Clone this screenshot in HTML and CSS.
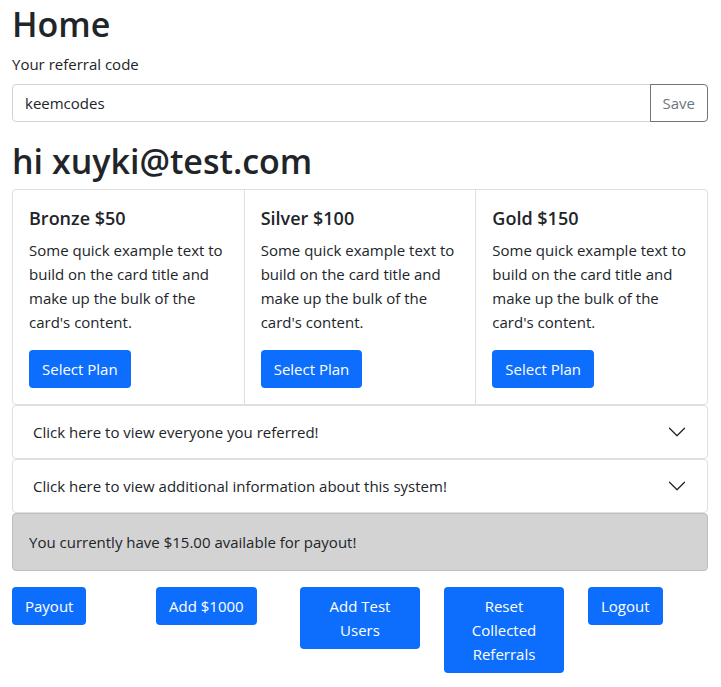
FILE: index.html
```html
<!DOCTYPE html>
<html lang="en">
<head>
<meta charset="utf-8">
<title>Home</title>
<link rel="stylesheet" href="styles.css">
</head>
<body>
<main class="container">
  <h1 class="title">Home</h1>
  <label class="label" for="code">Your referral code</label>
  <div class="input-group">
    <input class="input" id="code" type="text" value="keemcodes">
    <button class="save" type="button">Save</button>
  </div>
  <h1 class="title">hi xuyki@test.com</h1>
  <section class="cards">
    <article class="card">
      <h2 class="card-title">Bronze $50</h2>
      <p class="card-text">Some quick example text to build on the card title and make up the bulk of the card's content.</p>
      <button class="btn" type="button">Select Plan</button>
    </article>
    <article class="card">
      <h2 class="card-title">Silver $100</h2>
      <p class="card-text">Some quick example text to build on the card title and make up the bulk of the card's content.</p>
      <button class="btn" type="button">Select Plan</button>
    </article>
    <article class="card">
      <h2 class="card-title">Gold $150</h2>
      <p class="card-text">Some quick example text to build on the card title and make up the bulk of the card's content.</p>
      <button class="btn" type="button">Select Plan</button>
    </article>
  </section>
  <button class="accordion" type="button" aria-expanded="false">Click here to view everyone you referred!
    <svg class="chevron" viewBox="0 0 16 16" aria-hidden="true"><path d="M2 5l6 6 6-6"/></svg>
  </button>
  <button class="accordion" type="button" aria-expanded="false">Click here to view additional information about this system!
    <svg class="chevron" viewBox="0 0 16 16" aria-hidden="true"><path d="M2 5l6 6 6-6"/></svg>
  </button>
  <p class="balance">You currently have $15.00 available for payout!</p>
  <div class="actions">
    <div class="action"><button class="btn" type="button">Payout</button></div>
    <div class="action"><button class="btn" type="button">Add $1000</button></div>
    <div class="action"><button class="btn" type="button">Add Test Users</button></div>
    <div class="action"><button class="btn" type="button">Reset Collected Referrals</button></div>
    <div class="action"><button class="btn" type="button">Logout</button></div>
  </div>
</main>
</body>
</html>
```
FILE: styles.css
```css
* {
  box-sizing: border-box;
}

body {
  margin: 0;
  background: #fff;
  color: #212529;
  font: 400 15px/24px "Open Sans", "Noto Sans", sans-serif;
}

button,
input {
  font: inherit;
}

.container {
  padding: 1px 13px 0 12px;
}

.title {
  margin: 0 0 4px;
  font-size: 34px;
  font-weight: 600;
  line-height: 47px;
}

.label {
  display: block;
  margin-bottom: 8px;
}

.input-group {
  display: flex;
  margin-bottom: 16px;
}

.input {
  flex: 1;
  min-width: 0;
  padding: 6px 12px;
  border: 1px solid #ced4da;
  border-radius: 4px 0 0 4px;
  color: #212529;
}

.save {
  margin-left: -1px;
  padding: 6px 12px;
  border: 1px solid #6c757d;
  border-radius: 0 4px 4px 0;
  background: #fff;
  color: #6c757d;
}

.cards {
  display: flex;
  border: 1px solid #dfdfdf;
  border-radius: 4px;
}

.card {
  flex: 1;
  padding: 16px;
}

.card + .card {
  border-left: 1px solid #dfdfdf;
}

.card-title {
  margin: 0 0 8px;
  font-size: 18px;
  font-weight: 600;
  line-height: 24px;
}

.card-text {
  margin: 0 0 16px;
}

.btn {
  padding: 7px 13px;
  border: 0;
  border-radius: 4px;
  background: #0d6efd;
  color: #fff;
}

.accordion {
  display: flex;
  align-items: center;
  justify-content: space-between;
  width: 100%;
  padding: 14px 20px;
  border: 1px solid #dfdfdf;
  border-radius: 4px;
  background: #fff;
  color: #212529;
  text-align: left;
}

.chevron {
  width: 20px;
  height: 20px;
  fill: none;
  stroke: #212529;
  stroke-linecap: round;
  stroke-linejoin: round;
}

.balance {
  margin: 0 0 16px;
  padding: 16px;
  border: 1px solid #bcbebf;
  border-radius: 4px;
  background: #d3d3d3;
}

.actions {
  display: grid;
  grid-template-columns: repeat(5, 1fr);
  gap: 24px;
}
```
